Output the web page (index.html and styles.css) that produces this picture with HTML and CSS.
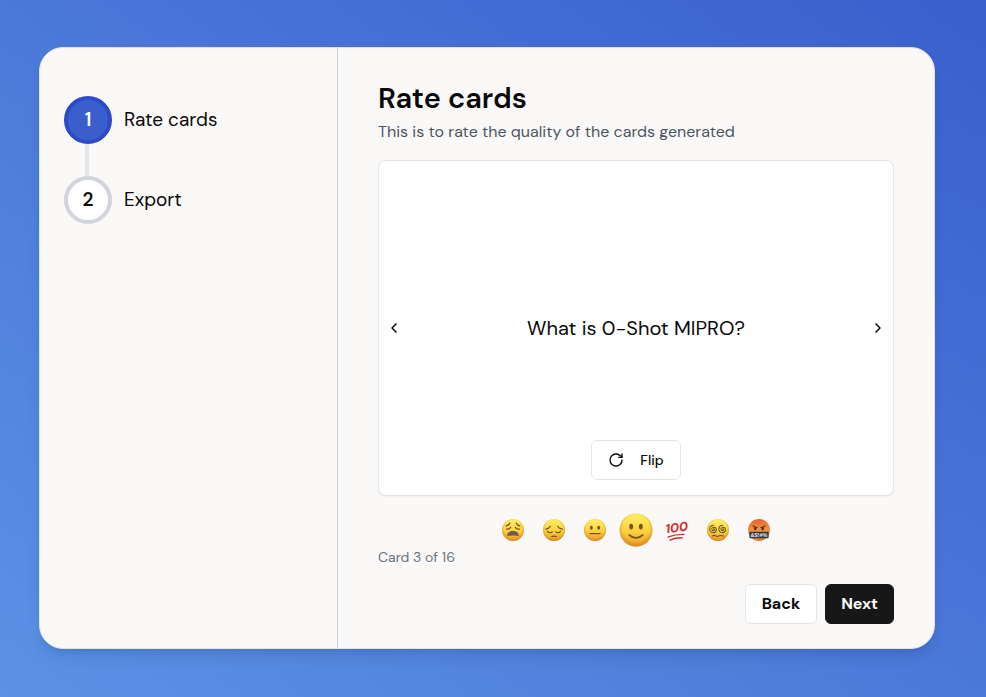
FILE: index.html
```html
<!DOCTYPE html>
<html lang="en">
<head>
<meta charset="utf-8">
<meta name="viewport" content="width=device-width, initial-scale=1">
<title>Rate cards</title>
<link rel="stylesheet" href="styles.css">
</head>
<body>
<svg class="defs" aria-hidden="true">
  <defs>
    <linearGradient id="yellow" x1="0" y1="0" x2="0" y2="1">
      <stop offset="0" stop-color="#fff06a"/><stop offset="0.55" stop-color="#fbd13c"/><stop offset="1" stop-color="#e99a2b"/>
    </linearGradient>
    <radialGradient id="rim" cx="0.5" cy="0.45" r="0.55">
      <stop offset="0.72" stop-color="#d98a1c" stop-opacity="0"/><stop offset="1" stop-color="#c97a1a" stop-opacity="0.65"/>
    </radialGradient>
    <linearGradient id="orange" x1="0" y1="0" x2="0" y2="1">
      <stop offset="0" stop-color="#e5602f"/><stop offset="0.5" stop-color="#f2933f"/><stop offset="1" stop-color="#e5772f"/>
    </linearGradient>
  </defs>
</svg>
<main class="panel">
  <aside class="sidebar">
    <ol class="steps">
      <li class="step step-active"><span class="badge">1</span><span>Rate cards</span></li>
      <li class="step"><span class="badge">2</span><span>Export</span></li>
    </ol>
  </aside>
  <section class="content">
    <h1>Rate cards</h1>
    <p class="subtitle">This is to rate the quality of the cards generated</p>
    <article class="card">
      <button class="arrow" type="button" aria-label="Previous card"><svg width="16" height="16" viewBox="0 0 16 16"><path d="M10 4 6 8l4 4"/></svg></button>
      <p class="question">What is 0-Shot MIPRO?</p>
      <button class="arrow" type="button" aria-label="Next card"><svg width="16" height="16" viewBox="0 0 16 16"><path d="m6 4 4 4-4 4"/></svg></button>
      <button class="button flip" type="button"><svg width="16" height="16" viewBox="0 0 24 24"><path d="M21 12a9 9 0 1 1-9-9c2.52 0 4.93 1 6.74 2.74L21 8"/><path d="M21 3v5h-5"/></svg>Flip</button>
    </article>
    <div class="ratings">
      <button class="rating" type="button" aria-label="Weary">
        <svg viewBox="0 0 24 24"><circle cx="12" cy="12" r="12" fill="url(#yellow)"/><circle cx="12" cy="12" r="12" fill="url(#rim)"/><path d="M5.500 19c0-4.500 2.800-6 6.500-6s6.500 1.500 6.500 6c-3.500-1.500-9.500-1.500-13 0Z" fill="#705c52"/><g class="face"><path d="M4.500 7.500c2-.3 3-1.200 4-3M19.500 7.500c-2-.3-3-1.200-4-3"/><path d="M5 11c2 .2 3.800-.5 4.500-2M19 11c-2 .2-3.800-.5-4.500-2"/></g></svg>
      </button>
      <button class="rating" type="button" aria-label="Pensive">
        <svg viewBox="0 0 24 24"><circle cx="12" cy="12" r="12" fill="url(#yellow)"/><circle cx="12" cy="12" r="12" fill="url(#rim)"/><g class="face"><path d="M3 11c2.200-.2 4-1.200 5-3M21 11c-2.200-.2-4-1.200-5-3"/><path d="M5 13.500c1 1.800 3.800 2 5 .5M19 13.500c-1 1.800-3.800 2-5 .5"/><path d="M9.500 19.200c1.600-.6 3.400-.6 5 0"/></g></svg>
      </button>
      <button class="rating" type="button" aria-label="Neutral">
        <svg viewBox="0 0 24 24"><circle cx="12" cy="12" r="12" fill="url(#yellow)"/><circle cx="12" cy="12" r="12" fill="url(#rim)"/><g fill="#77501b"><ellipse cx="8" cy="9.500" rx="1.500" ry="2.100"/><ellipse cx="16" cy="9.500" rx="1.500" ry="2.100"/></g><path class="face" d="M6.500 16h11"/></svg>
      </button>
      <button class="rating selected" type="button" aria-label="Slightly smiling" aria-pressed="true">
        <svg viewBox="0 0 24 24"><circle cx="12" cy="12" r="12" fill="url(#yellow)"/><circle cx="12" cy="12" r="12" fill="url(#rim)"/><g fill="#77501b"><ellipse cx="8.500" cy="9.500" rx="1.400" ry="2.100"/><ellipse cx="15.500" cy="9.500" rx="1.400" ry="2.100"/></g><path class="face" d="M7.200 15.800c2.600 2.600 7 2.600 9.600 0"/></svg>
      </button>
      <button class="rating" type="button" aria-label="Hundred points">
        <svg viewBox="0 0 24 24"><text class="hundred" x="12" y="14" text-anchor="middle" transform="rotate(-7 12 12)">100</text><path d="M2.500 19.500C8 17.500 14 16.600 19.500 16.800M4.500 23c4-1.800 8.500-2.600 13-2.500" fill="none" stroke="#cf2b2b" stroke-width="1.600" stroke-linecap="round"/></svg>
      </button>
      <button class="rating" type="button" aria-label="Spiral eyes">
        <svg viewBox="0 0 24 24"><circle cx="12" cy="12" r="12" fill="url(#yellow)"/><circle cx="12" cy="12" r="12" fill="url(#rim)"/><g class="spiral"><path id="swirl" d="M7 11c.6-.8 1.700.3 1 1.200-1 1.200-3 .2-2.800-1.400.3-2.200 3.500-2.500 4.700-.5 1.200 2.300-.7 4.700-3 4.700-2.600 0-4.300-2.200-3.900-4.700C3.400 8 5.200 6.700 7.300 6.800"/><use href="#swirl" x="10"/><path d="M6 18.500c1.300-.9 2.300-.9 3.500 0s2.200.9 3.400 0 2.500-.9 5 0"/></g></svg>
      </button>
      <button class="rating" type="button" aria-label="Cursing">
        <svg viewBox="0 0 24 24"><circle cx="12" cy="12" r="12" fill="url(#orange)"/><g fill="#542316"><ellipse cx="8" cy="10.500" rx="1.300" ry="1.700"/><ellipse cx="16" cy="10.500" rx="1.300" ry="1.700"/></g><path d="M5.500 7.500c1.300 1.200 2.500 1.600 4.500 1.700M18.500 7.500c-1.300 1.200-2.500 1.600-4.500 1.700" fill="none" stroke="#542316" stroke-width="1.100" stroke-linecap="round"/><rect x="1.500" y="14" width="21" height="7" rx="1" fill="#30363c"/><text class="curse" x="12" y="20" text-anchor="middle">&amp;$!#%</text></svg>
      </button>
    </div>
    <p class="progress">Card 3 of 16</p>
    <footer class="actions">
      <button class="button" type="button">Back</button>
      <button class="button primary" type="button">Next</button>
    </footer>
  </section>
</main>
</body>
</html>
```
FILE: styles.css
```css
* { box-sizing: border-box; }
body {
  margin: 0;
  min-height: 100vh;
  padding: 47px 51px 48px 39px;
  display: flex;
  background: linear-gradient(to top right, #5b92e5, #3a5fcd);
  color: #0a0a0a;
  font-family: "DM Sans", Inter, sans-serif;
  font-size: 16px;
  line-height: 24px;
}
h1, p, ol { margin: 0; padding: 0; }
button { font: inherit; color: inherit; cursor: pointer; }
.defs { position: absolute; width: 0; height: 0; }
.panel {
  flex: 1;
  display: grid;
  grid-template-columns: 1fr 2fr;
  background: #faf9f7;
  border: 1px solid #e2e3e7;
  border-radius: 24px;
  box-shadow: 0 10px 15px -3px rgb(0 0 0 / 0.1), 0 4px 6px -4px rgb(0 0 0 / 0.1);
}
.sidebar { padding: 48px 24px; border-right: 1px solid #ccd2de; }
.steps { list-style: none; display: flex; flex-direction: column; gap: 32px; }
.step {
  position: relative;
  display: flex;
  align-items: center;
  gap: 12px;
  font-size: 19px;
  line-height: 28px;
}
.step + .step::before {
  content: "";
  position: absolute;
  left: 21px;
  bottom: 100%;
  width: 4px;
  height: 32px;
  background: #e5e7eb;
}
.badge {
  width: 48px;
  height: 48px;
  display: grid;
  place-items: center;
  border: 4px solid #d1d5db;
  border-radius: 50%;
  background: #fff;
  font-weight: 600;
}
.step-active .badge { background: #3a5fcd; border-color: #2b4bc8; color: #fff; }
.content {
  display: flex;
  flex-direction: column;
  padding: 32px 40px 24px;
}
h1 { font-size: 29px; line-height: 36px; font-weight: 600; }
.subtitle { margin-top: 4px; color: #4b5563; }
.card {
  flex: 1;
  min-height: 336px;
  margin-top: 16px;
  padding: 15px 7px;
  display: grid;
  grid-template: 1fr auto 1fr / auto 1fr auto;
  align-items: center;
  background: #fff;
  border: 1px solid #e5e5e5;
  border-radius: 8px;
  box-shadow: 0 1px 2px rgb(0 0 0 / 0.05);
}
.arrow {
  grid-row: 2;
  display: flex;
  padding: 0;
  border: 0;
  background: none;
}
.arrow path, .flip path {
  fill: none;
  stroke: currentColor;
  stroke-width: 1.5;
  stroke-linecap: round;
  stroke-linejoin: round;
}
.flip path { stroke-width: 2; }
.question { grid-row: 2; text-align: center; font-size: 20px; line-height: 28px; }
.button {
  height: 40px;
  padding: 0 16px;
  display: flex;
  align-items: center;
  justify-content: center;
  background: #fff;
  border: 1px solid #e5e5e5;
  border-radius: 6px;
  font-weight: 700;
}
.flip {
  grid-area: 3 / 2;
  align-self: end;
  justify-self: center;
  gap: 16px;
  font-size: 14px;
  font-weight: 500;
}
.ratings { display: flex; justify-content: center; gap: 19px; margin-top: 16px; height: 35px; align-items: center; }
.rating { display: flex; padding: 0; border: 0; background: none; }
.rating svg { width: 22px; height: 22px; overflow: visible; }
.selected { transform: scale(1.5); }
.face { fill: none; stroke: #77501b; stroke-width: 1.3; stroke-linecap: round; }
.spiral { fill: none; stroke: #66511d; stroke-width: 1.1; stroke-linecap: round; }
.hundred { fill: #cf2b2b; font: italic 700 14px "Liberation Sans Narrow", "DM Sans", "Liberation Sans", sans-serif; }
.curse { fill: #e5e7e9; font: 700 6px "Liberation Sans", sans-serif; }
.progress { font-size: 14px; line-height: 20px; color: #6b7280; }
.actions { display: flex; justify-content: flex-end; gap: 8px; margin-top: 17px; }
.primary { padding: 0 15px; background: #171717; border-color: #171717; color: #fafafa; }
```
